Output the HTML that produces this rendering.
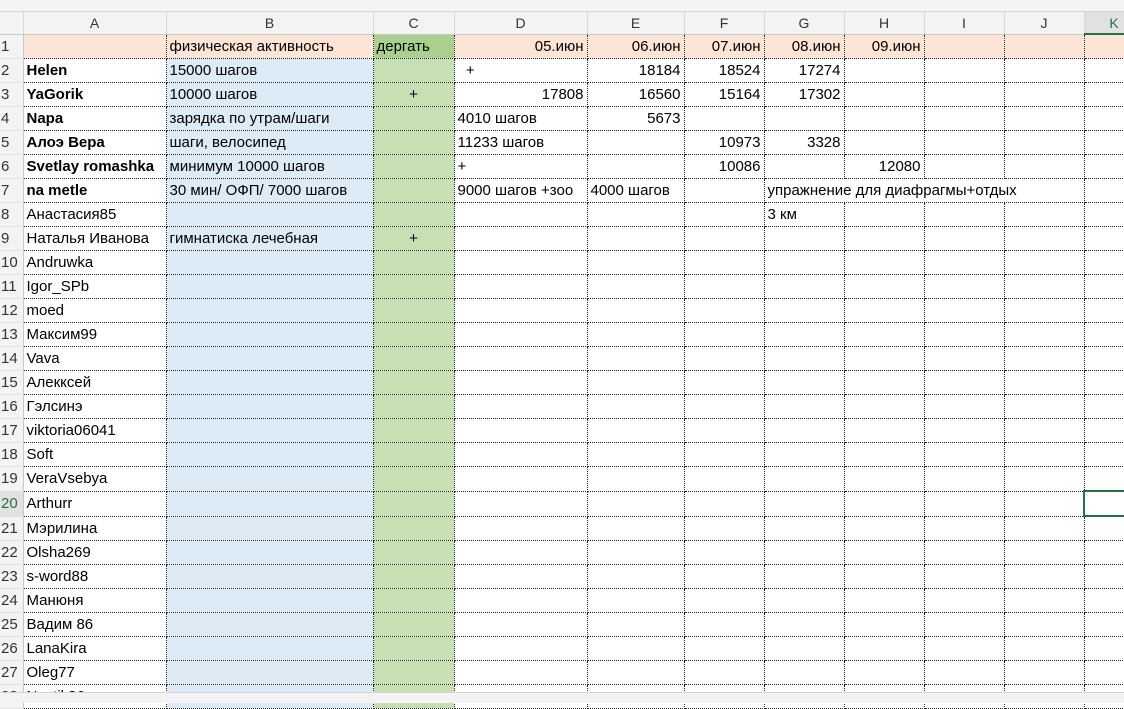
<!DOCTYPE html>
<html><head><meta charset="utf-8"><style>
body{margin:0;width:1124px;height:702px;overflow:hidden;background:#fff;font-family:"Liberation Sans","DejaVu Sans",sans-serif;font-size:15px;position:relative}
.top{position:absolute;left:0;top:0;width:1124px;height:11px;background:#f3f3f3;border-bottom:1px solid #d4d4d4}
table{position:absolute;left:0;top:12px;border-collapse:collapse;table-layout:fixed;width:1144px}
td{height:23px;padding:0 3px;white-space:nowrap;overflow:hidden;border:1px dotted #222;color:#000}
tr.h td{height:21px;background:#f3f3f3;border:none;border-right:1px solid #d8d8d8;border-bottom:1px solid #c8c8c8;text-align:center;color:#333;font-size:14px}
td.r{background:#f3f3f3;border:none;border-right:1px solid #c8c8c8;border-bottom:1px solid #e0e0e0;color:#333;padding:0 0 0 1px;font-size:15px}
.b{background:#ddebf7}.c{background:#c6e0b4}.o{background:#fce4d6}.cc{background:#a9d08e}
.R{text-align:right}.M{text-align:center}.B{font-weight:bold}
.bot{position:absolute;left:0;top:692px;width:1124px;height:10px;background:#f3f3f3;border-top:1px solid #d4d4d4}
</style></head><body>
<div class="top"></div>
<table>
<colgroup><col style="width:23px"><col style="width:143px"><col style="width:207px"><col style="width:81px"><col style="width:133px"><col style="width:97px"><col style="width:80px"><col style="width:80px"><col style="width:80px"><col style="width:80px"><col style="width:80px"><col style="width:60px"></colgroup>
<tr class="h"><td></td><td>A</td><td>B</td><td>C</td><td>D</td><td>E</td><td>F</td><td>G</td><td>H</td><td>I</td><td>J</td><td style="border-bottom:2px solid #217346;color:#217346;background:#e1e1e1">K</td></tr>
<tr><td class="r">1</td><td class="o"></td><td class="o">физическая активность</td><td class="cc">дергать</td><td class="o R">05.июн</td><td class="o R">06.июн</td><td class="o R">07.июн</td><td class="o R">08.июн</td><td class="o R">09.июн</td><td class="o"></td><td class="o"></td><td class="o"></td></tr>
<tr><td class="r">2</td><td class="B">Helen</td><td class="b">15000 шагов</td><td class="c"></td><td>&nbsp;&nbsp;+</td><td class="R">18184</td><td class="R">18524</td><td class="R">17274</td><td></td><td></td><td></td><td></td></tr>
<tr><td class="r">3</td><td class="B">YaGorik</td><td class="b">10000 шагов</td><td class="c M">+</td><td class="R">17808</td><td class="R">16560</td><td class="R">15164</td><td class="R">17302</td><td></td><td></td><td></td><td></td></tr>
<tr><td class="r">4</td><td class="B">Napa</td><td class="b">зарядка по утрам/шаги</td><td class="c"></td><td>4010 шагов</td><td class="R">5673</td><td></td><td></td><td></td><td></td><td></td><td></td></tr>
<tr><td class="r">5</td><td class="B">Алоэ Вера</td><td class="b">шаги, велосипед</td><td class="c"></td><td>11233 шагов</td><td></td><td class="R">10973</td><td class="R">3328</td><td></td><td></td><td></td><td></td></tr>
<tr><td class="r">6</td><td class="B">Svetlay romashka</td><td class="b">минимум 10000 шагов</td><td class="c"></td><td>+</td><td></td><td class="R">10086</td><td></td><td class="R">12080</td><td></td><td></td><td></td></tr>
<tr><td class="r">7</td><td class="B">na metle</td><td class="b">30 мин/ ОФП/ 7000 шагов</td><td class="c"></td><td>9000 шагов +зоо</td><td>4000 шагов</td><td></td><td colspan="4">упражнение для диафрагмы+отдых</td><td></td></tr>
<tr><td class="r">8</td><td>Анастасия85</td><td class="b"></td><td class="c"></td><td></td><td></td><td></td><td>3 км</td><td></td><td></td><td></td><td></td></tr>
<tr><td class="r">9</td><td>Наталья Иванова</td><td class="b">гимнатиска лечебная</td><td class="c M">+</td><td></td><td></td><td></td><td></td><td></td><td></td><td></td><td></td></tr>
<tr><td class="r">10</td><td>Andruwka</td><td class="b"></td><td class="c"></td><td></td><td></td><td></td><td></td><td></td><td></td><td></td><td></td></tr>
<tr><td class="r">11</td><td>Igor_SPb</td><td class="b"></td><td class="c"></td><td></td><td></td><td></td><td></td><td></td><td></td><td></td><td></td></tr>
<tr><td class="r">12</td><td>moed</td><td class="b"></td><td class="c"></td><td></td><td></td><td></td><td></td><td></td><td></td><td></td><td></td></tr>
<tr><td class="r">13</td><td>Максим99</td><td class="b"></td><td class="c"></td><td></td><td></td><td></td><td></td><td></td><td></td><td></td><td></td></tr>
<tr><td class="r">14</td><td>Vava</td><td class="b"></td><td class="c"></td><td></td><td></td><td></td><td></td><td></td><td></td><td></td><td></td></tr>
<tr><td class="r">15</td><td>Алекксей</td><td class="b"></td><td class="c"></td><td></td><td></td><td></td><td></td><td></td><td></td><td></td><td></td></tr>
<tr><td class="r">16</td><td>Гэлсинэ</td><td class="b"></td><td class="c"></td><td></td><td></td><td></td><td></td><td></td><td></td><td></td><td></td></tr>
<tr><td class="r">17</td><td>viktoria06041</td><td class="b"></td><td class="c"></td><td></td><td></td><td></td><td></td><td></td><td></td><td></td><td></td></tr>
<tr><td class="r">18</td><td>Soft</td><td class="b"></td><td class="c"></td><td></td><td></td><td></td><td></td><td></td><td></td><td></td><td></td></tr>
<tr><td class="r">19</td><td>VeraVsebya</td><td class="b"></td><td class="c"></td><td></td><td></td><td></td><td></td><td></td><td></td><td></td><td></td></tr>
<tr><td class="r" style="color:#217346;background:#e1e1e1">20</td><td>Arthurr</td><td class="b"></td><td class="c"></td><td></td><td></td><td></td><td></td><td></td><td></td><td></td><td style="border:2px solid #217346"></td></tr>
<tr><td class="r">21</td><td>Мэрилина</td><td class="b"></td><td class="c"></td><td></td><td></td><td></td><td></td><td></td><td></td><td></td><td></td></tr>
<tr><td class="r">22</td><td>Olsha269</td><td class="b"></td><td class="c"></td><td></td><td></td><td></td><td></td><td></td><td></td><td></td><td></td></tr>
<tr><td class="r">23</td><td>s-word88</td><td class="b"></td><td class="c"></td><td></td><td></td><td></td><td></td><td></td><td></td><td></td><td></td></tr>
<tr><td class="r">24</td><td>Манюня</td><td class="b"></td><td class="c"></td><td></td><td></td><td></td><td></td><td></td><td></td><td></td><td></td></tr>
<tr><td class="r">25</td><td>Вадим 86</td><td class="b"></td><td class="c"></td><td></td><td></td><td></td><td></td><td></td><td></td><td></td><td></td></tr>
<tr><td class="r">26</td><td>LanaKira</td><td class="b"></td><td class="c"></td><td></td><td></td><td></td><td></td><td></td><td></td><td></td><td></td></tr>
<tr><td class="r">27</td><td>Oleg77</td><td class="b"></td><td class="c"></td><td></td><td></td><td></td><td></td><td></td><td></td><td></td><td></td></tr>
<tr><td class="r">28</td><td>Nastik36</td><td class="b"></td><td class="c"></td><td></td><td></td><td></td><td></td><td></td><td></td><td></td><td></td></tr>
</table>
<div class="bot"></div>
</body></html>
